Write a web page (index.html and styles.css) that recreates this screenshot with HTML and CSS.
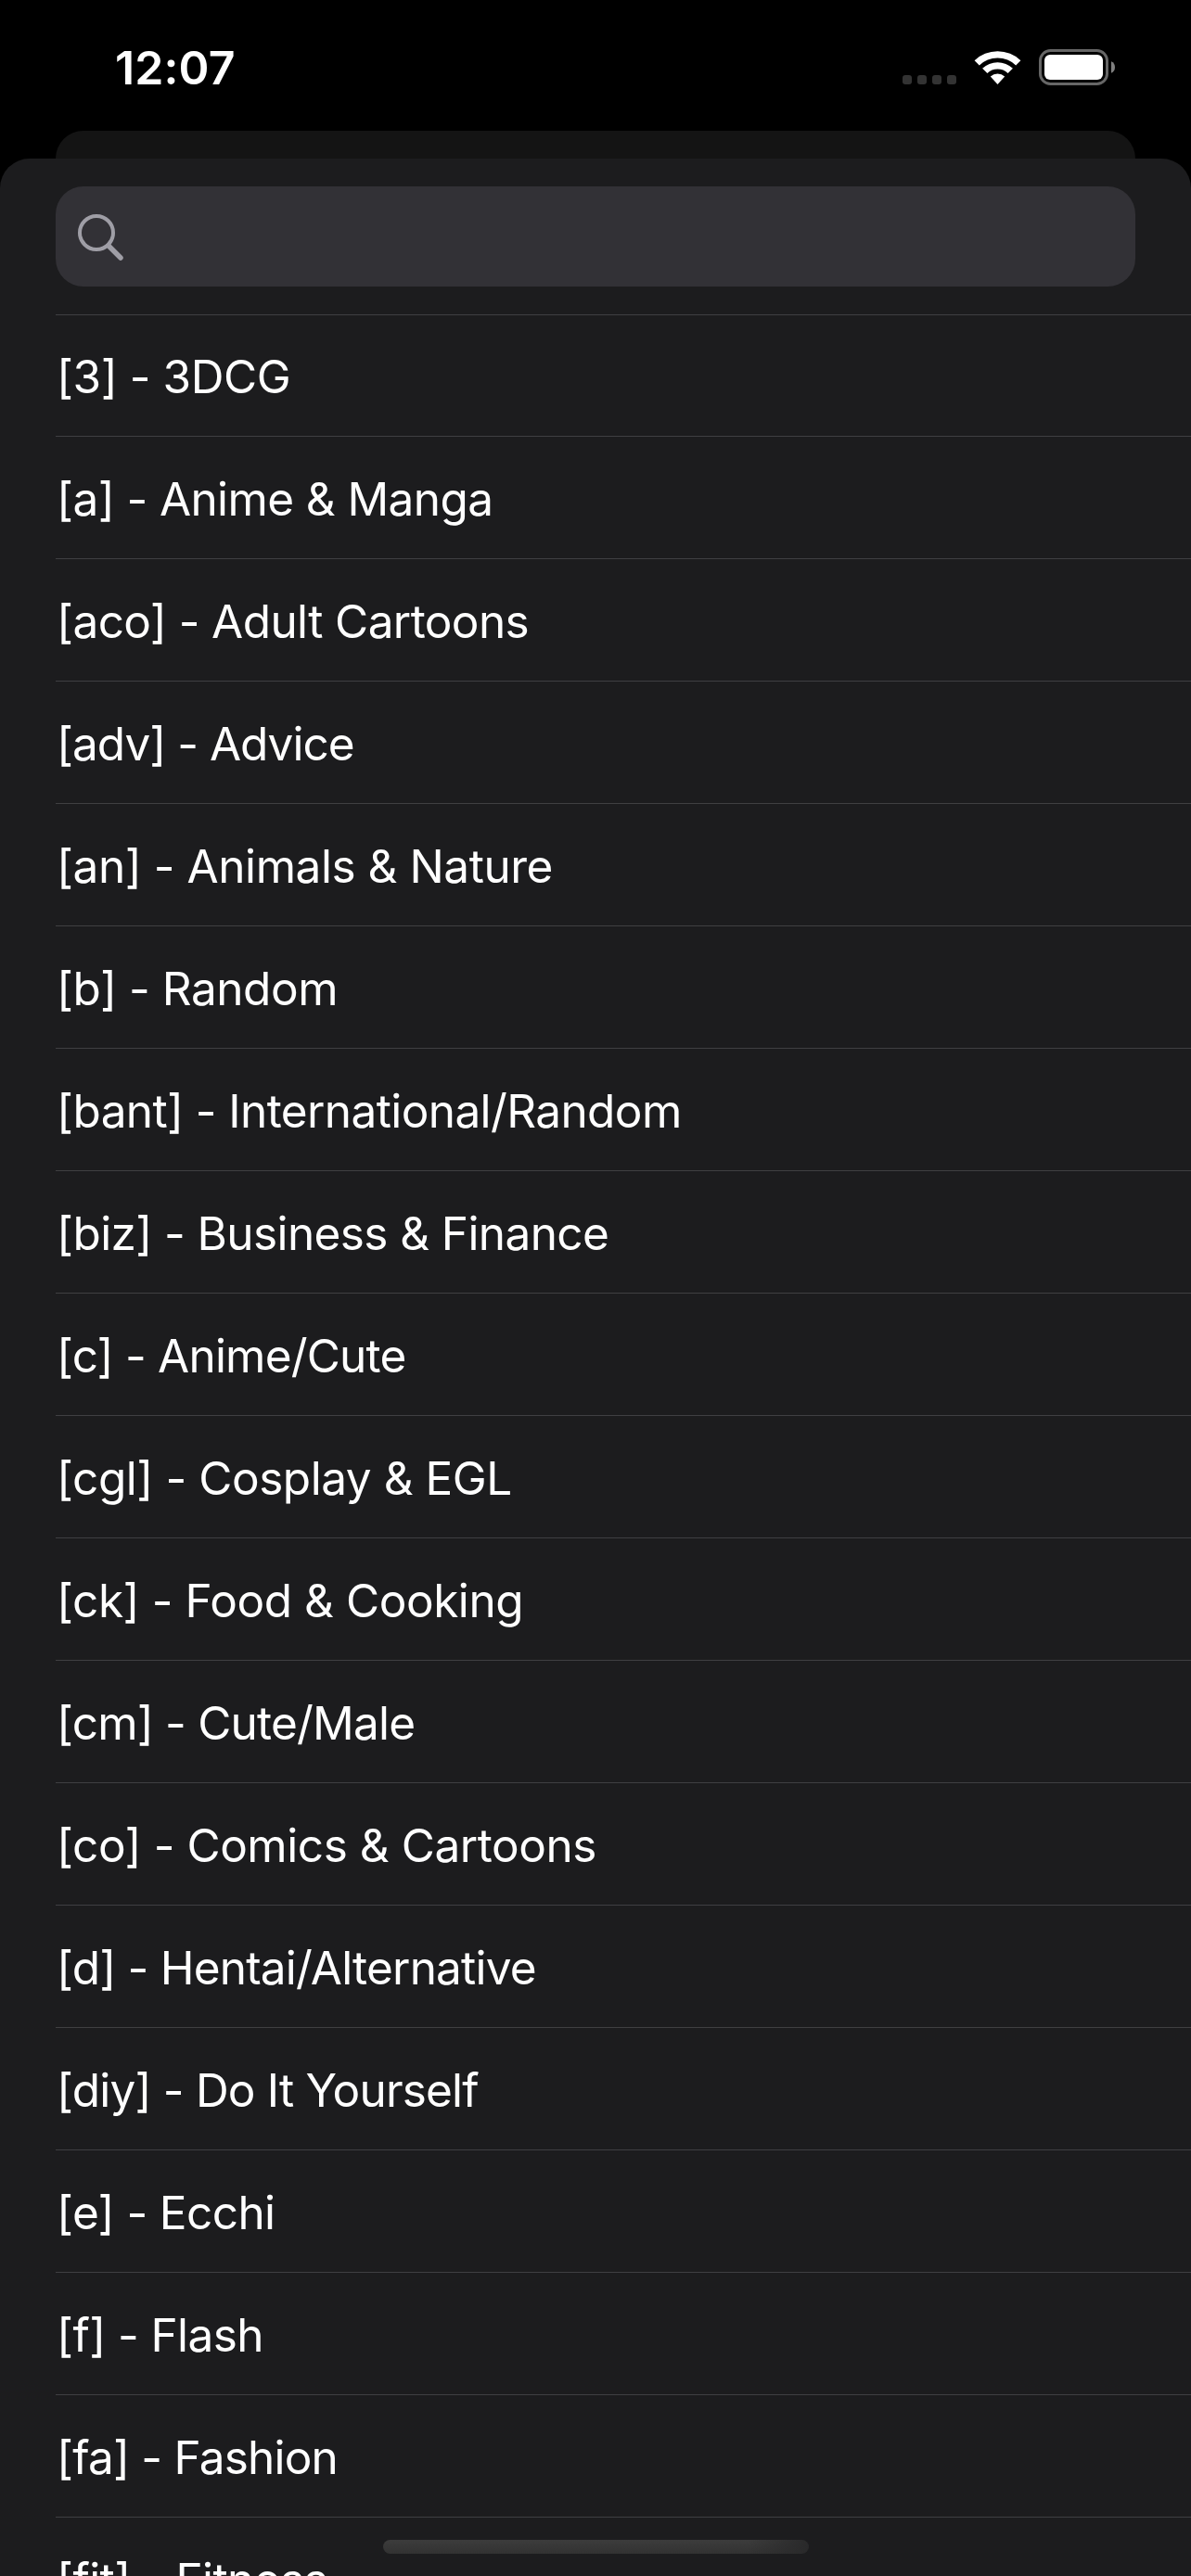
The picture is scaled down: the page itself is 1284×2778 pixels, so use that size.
FILE: index.html
```html
<!DOCTYPE html>
<html lang="en">
<head>
<meta charset="utf-8">
<title>Boards</title>
<link rel="stylesheet" href="styles.css">
</head>
<body>
<header class="status">
  <time class="clock">12:07</time>
  <div class="indicators">
    <svg class="cellular" viewBox="0 0 58 10"><rect width="10" height="10" rx="3"/><rect x="16" width="10" height="10" rx="3"/><rect x="32" width="10" height="10" rx="3"/><rect x="48" width="10" height="10" rx="3"/></svg>
    <svg class="wifi" viewBox="0 0 51 38"><path d="M0.6 11.2A36 36 0 0 1 50.4 11.2L45.2 16.4A28.3 28.3 0 0 0 5.8 16.4Z"/><path d="M9.1 19.8A23.6 23.6 0 0 1 41.9 19.8L36.6 25A16 16 0 0 0 14.4 25Z"/><path d="M17.8 28.5A11.3 11.3 0 0 1 33.2 28.5L25.5 37Z"/></svg>
    <svg class="battery" viewBox="0 0 82 39"><rect class="shell" x="1.5" y="1.5" width="72" height="36" rx="11"/><rect class="charge" x="6" y="6" width="63" height="27" rx="6"/><path class="tip" d="M78 13.2Q82 15 82 19.5T78 25.8Z"/></svg>
  </div>
</header>
<div class="backdrop"></div>
<main class="sheet">
  <label class="search">
    <svg class="glass" viewBox="0 0 50 50"><circle cx="20" cy="20" r="18"/><path d="M33 34L46 47"/></svg>
    <input class="field" type="text" aria-label="Search">
  </label>
  <ul class="boards">
    <li class="loose">[3] - 3DCG</li>
    <li>[a] - Anime &amp; Manga</li>
    <li>[aco] - Adult Cartoons</li>
    <li class="tighter">[adv] - Advice</li>
    <li class="loose">[an] - Animals &amp; Nature</li>
    <li class="loose">[b] - Random</li>
    <li>[bant] - International/Random</li>
    <li>[biz] - Business &amp; Finance</li>
    <li class="tight">[c] - Anime/Cute</li>
    <li class="loose">[cgl] - Cosplay &amp; EGL</li>
    <li class="loose">[ck] - Food &amp; Cooking</li>
    <li class="tight">[cm] - Cute/Male</li>
    <li class="loose">[co] - Comics &amp; Cartoons</li>
    <li class="tight">[d] - Hentai/Alternative</li>
    <li class="tight">[diy] - Do It Yourself</li>
    <li>[e] - Ecchi</li>
    <li>[f] - Flash</li>
    <li class="tight">[fa] - Fashion</li>
    <li>[fit] - Fitness</li>
  </ul>
</main>
<div class="home"></div>
</body>
</html>
```
FILE: styles.css
```css
* { box-sizing: border-box; }
body {
  margin: 0;
  height: 2778px;
  display: flex;
  flex-direction: column;
  overflow: hidden;
  background: #000;
  color: #fff;
  font-family: Inter, "Liberation Sans", sans-serif;
  font-feature-settings: "calt" 0;
}
.status {
  flex: none;
  height: 141px;
  padding: 53px 82px 0 124px;
  display: flex;
  justify-content: space-between;
  align-items: flex-start;
}
.clock { font-size: 50px; line-height: 40px; font-weight: 600; letter-spacing: 0.1px; }
.indicators { display: flex; align-items: flex-end; height: 39px; }
.indicators svg { display: block; }
.cellular { width: 58px; height: 10px; margin: 0 19px 1px 0; fill: #333; }
.wifi { width: 51px; height: 38px; margin-right: 19px; fill: #fff; }
.battery { width: 82px; height: 39px; }
.shell { fill: none; stroke: #666; stroke-width: 3; }
.charge { fill: #fff; }
.tip { fill: #808080; }
.backdrop { flex: none; height: 30px; margin: 0 60px; background: #141414; border-radius: 30px 30px 0 0; }
.sheet {
  flex: 1;
  min-height: 0;
  overflow: hidden;
  padding: 30px 0 0 60px;
  background: #1c1c1e;
  border-radius: 32px 32px 0 0;
}
.search {
  display: flex;
  align-items: center;
  width: 1164px;
  height: 108px;
  padding-left: 24px;
  background: #323136;
  border-radius: 30px;
}
.glass { width: 50px; height: 50px; margin-top: 1px; fill: none; stroke: #9f9ea6; stroke-width: 4; }
.glass path { stroke-width: 5.5; stroke-linecap: round; }
.field { flex: 1; border: 0; outline: 0; background: none; color: inherit; font: inherit; }
.boards { list-style: none; margin: 30px 0 0; padding: 0; }
.boards li {
  height: 132px;
  padding: 34px 0 0 1px;
  border-top: 1px solid #3f3f42;
  font-size: 49.5px;
  line-height: 66px;
  letter-spacing: -0.6px;
  white-space: nowrap;
}
.boards li:first-child { height: 131px; padding-top: 33px; }
.boards .loose { letter-spacing: -0.45px; }
.boards .tight { letter-spacing: -0.8px; }
.boards .tighter { letter-spacing: -1px; }
.home {
  position: absolute;
  left: 413px;
  top: 2739px;
  width: 459px;
  height: 15px;
  border-radius: 7.5px;
  background: linear-gradient(90deg, transparent 86%, #29292a 100%), linear-gradient(#3c3c3c, #323232);
}
```
